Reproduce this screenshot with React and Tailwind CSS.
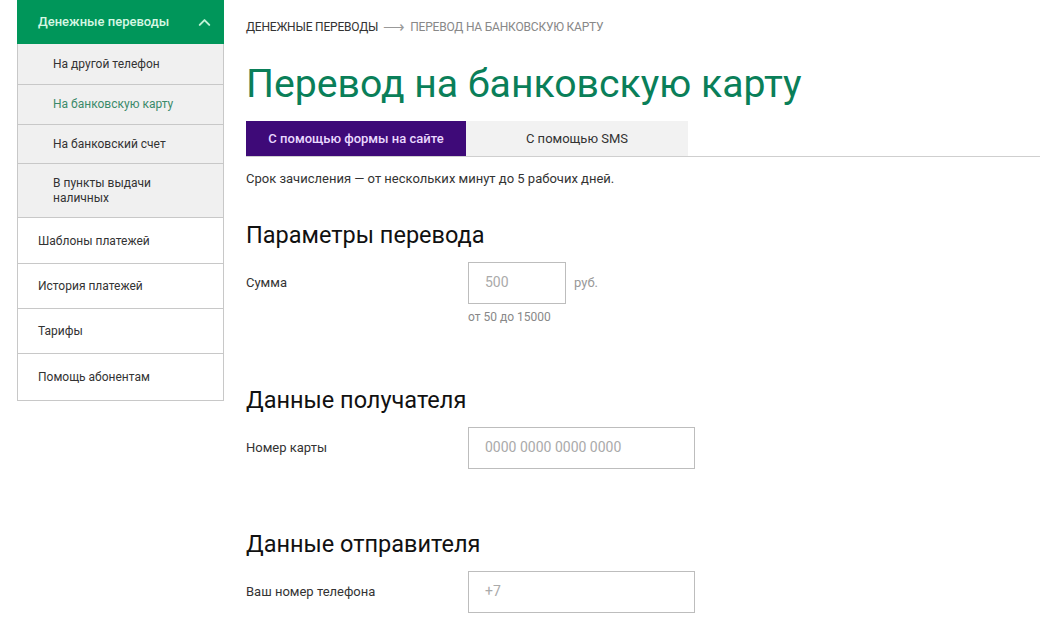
import { ChevronUp } from "lucide-react";

const subItems = [
  { label: "На другой телефон", h: "h-[41px]" },
  { label: "На банковскую карту", h: "h-[40px]", active: true },
  { label: "На банковский счет", h: "h-[39px]" },
  { label: "В пункты выдачи наличных", h: "h-[54px]", wrap: true },
];

const mainItems = [
  { label: "Шаблоны платежей", h: "h-[46px]" },
  { label: "История платежей", h: "h-[45px]" },
  { label: "Тарифы", h: "h-[45px]" },
  { label: "Помощь абонентам", h: "h-[46px]" },
];

function Field({ label, placeholder, width, suffix, hint }) {
  return (
    <div className="flex items-start">
      <div className="w-[222px] pt-[11px] text-[13px] text-[#333]">{label}</div>
      <div>
        <div className="flex items-center">
          <div className={`${width} h-[42px] border border-[#bdbdbd] flex items-center px-4 text-[14px] text-[#aaa]`}>
            {placeholder}
          </div>
          {suffix && <span className="ml-2 text-[13px] text-[#999]">{suffix}</span>}
        </div>
        {hint && <div className="mt-[4px] text-[12px] text-[#888]">{hint}</div>}
      </div>
    </div>
  );
}

export default function App() {
  return (
    <div className="w-[1040px] h-[625px] bg-white flex overflow-hidden font-['Roboto',sans-serif]">
      {/* Sidebar */}
      <div className="ml-[17px] w-[207px] shrink-0">
        <div className="h-[44px] bg-[#00965a] flex items-center justify-between pl-[21px] pr-[10px]">
          <span className="text-[13px] font-medium text-[#d6f7e3]">Денежные переводы</span>
          <ChevronUp size={19} strokeWidth={2.5} className="text-[#bff2d6]" />
        </div>
        <div className="border-x border-b border-[#c8c8c8]">
          {subItems.map((it) => (
            <div
              key={it.label}
              className={`${it.h} bg-[#f0f0f0] border-b border-[#c8c8c8] flex items-center pl-[35px] pr-10 text-[12px] leading-[15px] ${
                it.active ? "text-[#3b8a6a]" : "text-[#333]"
              }`}
            >
              {it.wrap ? <span className="w-[110px]">{it.label}</span> : it.label}
            </div>
          ))}
          {mainItems.map((it, i) => (
            <div
              key={it.label}
              className={`${it.h} flex items-center pl-[20px] text-[12px] text-[#333] ${
                i < mainItems.length - 1 ? "border-b border-[#c8c8c8]" : ""
              }`}
            >
              {it.label}
            </div>
          ))}
        </div>
      </div>

      {/* Main */}
      <div className="flex-1 pl-[22px] pt-[18px]">
        <div className="text-[12px] uppercase text-[#888] flex items-center">
          <span className="text-[#333] tracking-[-0.2px]">Денежные переводы</span>
          <span className="mx-[5px] text-[#999] text-[15px] leading-[12px]">⟶</span>
          <span className="tracking-[-0.2px]">Перевод на банковскую карту</span>
        </div>
        <h1 className="mt-[25px] text-[39.2px] leading-[46px] text-[#0a7f59] font-normal">
          Перевод на банковскую карту
        </h1>
        <div className="mt-[14px] flex border-b border-[#cfcfcf]">
          <div className="w-[220px] h-[35px] bg-[#3e0a78] flex items-center justify-center text-[13px] font-medium text-[#ead8ff]">
            С помощью формы на сайте
          </div>
          <div className="w-[222px] h-[35px] bg-[#f2f2f2] flex items-center justify-center text-[13px] text-[#333]">
            С помощью SMS
          </div>
        </div>
        <p className="mt-[12px] text-[13px] text-[#333]">
          Срок зачисления — от нескольких минут до 5 рабочих дней.
        </p>

        <h2 className="mt-[32px] text-[23.5px] leading-[28px] text-[#111]">Параметры перевода</h2>
        <div className="mt-[13px]">
          <Field label="Сумма" placeholder="500" width="w-[98px]" suffix="руб." hint="от 50 до 15000" />
        </div>

        <h2 className="mt-[60px] text-[23.5px] leading-[28px] text-[#111]">Данные получателя</h2>
        <div className="mt-[13px]">
          <Field label="Номер карты" placeholder="0000 0000 0000 0000" width="w-[227px]" />
        </div>

        <h2 className="mt-[61px] text-[23.5px] leading-[28px] text-[#111]">Данные отправителя</h2>
        <div className="mt-[13px]">
          <Field label="Ваш номер телефона" placeholder="+7" width="w-[227px]" />
        </div>
      </div>
    </div>
  );
}
